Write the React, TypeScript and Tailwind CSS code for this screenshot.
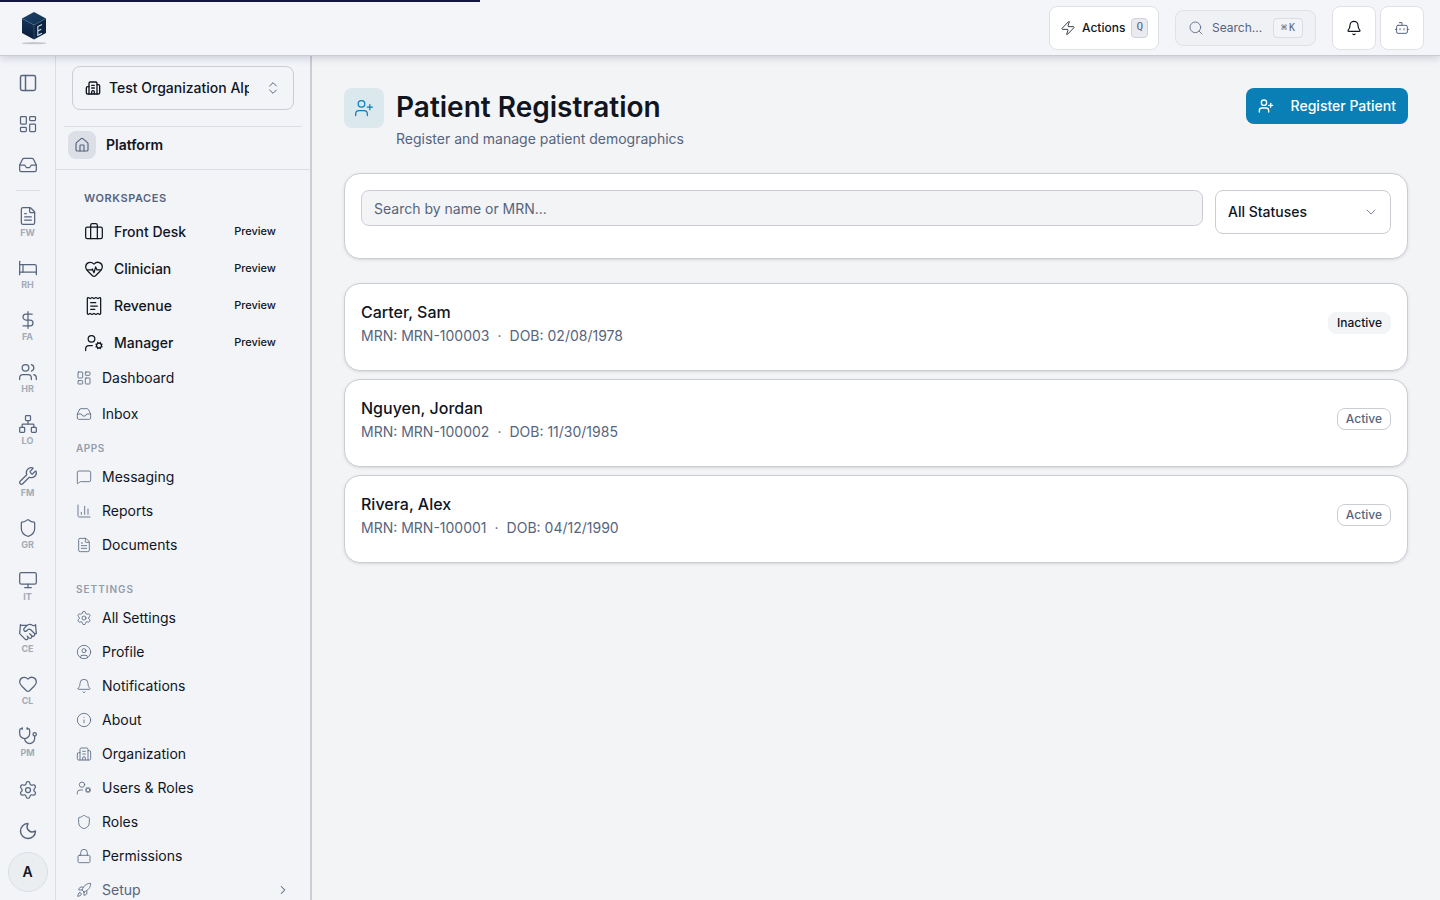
import React from 'react';
import {
  Bed,
  Bell,
  Bot,
  Briefcase,
  Building2,
  ChartColumn,
  ChevronDown,
  ChevronRight,
  ChevronsUpDown,
  CircleUser,
  DollarSign,
  FileText,
  Handshake,
  Heart,
  HeartPulse,
  House,
  Inbox,
  Info,
  LayoutDashboard,
  Lock,
  MessageSquare,
  Monitor,
  Moon,
  Network,
  PanelLeft,
  ReceiptText,
  Rocket,
  Search,
  Settings,
  Shield,
  Stethoscope,
  UserCog,
  UserPlus,
  Users,
  Wrench,
  Zap,
} from 'lucide-react';
import type { LucideIcon } from 'lucide-react';

type NavItem = { icon: LucideIcon; label: string };

const modules: NavItem[] = [
  { icon: FileText, label: 'FW' },
  { icon: Bed, label: 'RH' },
  { icon: DollarSign, label: 'FA' },
  { icon: Users, label: 'HR' },
  { icon: Network, label: 'LO' },
  { icon: Wrench, label: 'FM' },
  { icon: Shield, label: 'GR' },
  { icon: Monitor, label: 'IT' },
  { icon: Handshake, label: 'CE' },
  { icon: Heart, label: 'CL' },
  { icon: Stethoscope, label: 'PM' },
];

const workspaces: NavItem[] = [
  { icon: Briefcase, label: 'Front Desk' },
  { icon: HeartPulse, label: 'Clinician' },
  { icon: ReceiptText, label: 'Revenue' },
  { icon: UserCog, label: 'Manager' },
];

const apps: NavItem[] = [
  { icon: MessageSquare, label: 'Messaging' },
  { icon: ChartColumn, label: 'Reports' },
  { icon: FileText, label: 'Documents' },
];

const settings: NavItem[] = [
  { icon: Settings, label: 'All Settings' },
  { icon: CircleUser, label: 'Profile' },
  { icon: Bell, label: 'Notifications' },
  { icon: Info, label: 'About' },
  { icon: Building2, label: 'Organization' },
  { icon: UserCog, label: 'Users & Roles' },
  { icon: Shield, label: 'Roles' },
  { icon: Lock, label: 'Permissions' },
];

const patients = [
  { name: 'Carter, Sam', mrn: 'MRN-100003', dob: '02/08/1978', active: false },
  { name: 'Nguyen, Jordan', mrn: 'MRN-100002', dob: '11/30/1985', active: true },
  { name: 'Rivera, Alex', mrn: 'MRN-100001', dob: '04/12/1990', active: true },
];

const Logo = () => (
  <svg width="28" height="36" viewBox="0 0 28 36" aria-hidden="true">
    <defs>
      <linearGradient id="cube-top" x1="0" y1="0" x2="1" y2="1">
        <stop offset="0" stopColor="#1d4468" />
        <stop offset="1" stopColor="#12304f" />
      </linearGradient>
      <linearGradient id="cube-left" x1="0" y1="0" x2="0" y2="1">
        <stop offset="0" stopColor="#14365a" />
        <stop offset="1" stopColor="#0a1c38" />
      </linearGradient>
    </defs>
    <path d="M14 2 26 8.5 14 15 2 8.5Z" fill="url(#cube-top)" />
    <path d="M2 8.5 14 15V29.500L2 23Z" fill="url(#cube-left)" />
    <path d="M26 8.500 14 15V29.500L26 23Z" fill="#0d2543" />
    <path d="M2 8.500 14 15 26 8.500M14 15V29" fill="none" stroke="#47708f" strokeWidth=".5" />
    <path d="M22 14.500 17.800 16.600V25.300L22 23.200M17.800 21 21.300 19.200" fill="none" stroke="#cfdde9" strokeWidth="1.100" />
    <ellipse cx="14" cy="33.200" rx="12.500" ry="1.100" fill="#c3c6cd" />
  </svg>
);

const RailButton = ({ icon: Icon, label, stroke = 1.5 }: NavItem & { stroke?: number }) => (
  <button aria-label={label} className="flex h-10 w-10 items-center justify-center rounded-lg text-[#56657d]">
    <Icon size={20} strokeWidth={stroke} />
  </button>
);

const SideLink = ({ icon: Icon, label }: NavItem) => (
  <a href="#" className="flex h-[34px] items-center gap-2.5 rounded-lg px-2 text-sm text-[#10151f]">
    <Icon size={16} strokeWidth={1.25} className="text-[#56657d]" />
    {label}
  </a>
);

const TopBar = () => (
  <header className="relative z-10 flex h-14 shrink-0 items-center justify-between border-b border-[#c9cbd3] bg-[#f4f5f8] pr-4 pl-5 shadow-[0_2px_8px_rgba(20,24,60,0.18)]">
    <div className="absolute top-0 left-0 h-0.5 w-1/3 bg-[#14183f]" />
    <Logo />
    <div className="flex items-center">
      <button className="mr-4 flex h-11 items-center gap-1.5 rounded-lg border border-[#dfe1e7] bg-white px-2.5 text-xs font-medium text-[#10151f]">
        <Zap size={16} strokeWidth={1.25} />
        Actions
        <kbd className="flex h-5 items-center rounded border border-[#cfd2da] bg-[#e9ebf1] px-1 font-['DejaVu_Sans_Mono',monospace] text-[11px] text-[#56657d]">
          Q
        </kbd>
      </button>
      <button className="mr-4 flex h-9 w-[141px] items-center gap-2 rounded-lg border border-[#dfe1e7] bg-[#eff1f5] px-3 text-xs text-[#56657d]">
        <Search size={16} strokeWidth={1.25} />
        <span className="flex-1 text-left">Search...</span>
        <kbd className="flex h-5 items-center gap-0.5 rounded border border-[#d9dce3] bg-[#f3f4f7] px-[7px] font-['DejaVu_Sans_Mono',monospace] text-[10px]">
          <span>⌘</span>
          <span>K</span>
        </kbd>
      </button>
      <button aria-label="Notifications" className="mr-1 flex h-11 w-11 items-center justify-center rounded-lg border border-[#dfe1e7] bg-white text-[#10151f]">
        <Bell size={16} strokeWidth={1.75} />
      </button>
      <button aria-label="Assistant" className="flex h-11 w-11 items-center justify-center rounded-lg border border-[#dfe1e7] bg-white text-[#56657d]">
        <Bot size={16} strokeWidth={1.5} />
      </button>
    </div>
  </header>
);

const Rail = () => (
  <nav aria-label="Modules" className="flex w-14 shrink-0 flex-col items-center border-r border-[#dcdee5] pt-[7px] pb-2">
    <div className="flex flex-col gap-px">
      <RailButton icon={PanelLeft} label="Toggle sidebar" stroke={1.75} />
      <RailButton icon={LayoutDashboard} label="Dashboard" />
      <RailButton icon={Inbox} label="Inbox" />
    </div>
    <hr className="mt-[5px] w-6 border-[#dcdee5]" />
    <div className="mt-[7px] flex flex-1 flex-col gap-1">
      {modules.map(({ icon: Icon, label }) => (
        <a key={label} href="#" className="flex h-12 w-10 flex-col items-center pt-2 text-[#56657d]">
          <Icon size={20} strokeWidth={1.5} />
          <span className="mt-px text-[9px] leading-3 font-bold text-[#a3abb9]">{label}</span>
        </a>
      ))}
    </div>
    <div className="flex flex-col gap-px">
      <RailButton icon={Settings} label="Settings" />
      <RailButton icon={Moon} label="Dark mode" stroke={1.75} />
      <button className="h-10 w-10 rounded-full border border-[#dcdfe5] bg-[#eaeef1] text-sm font-semibold text-[#10151f]">A</button>
    </div>
  </nav>
);

const Sidebar = () => (
  <aside className="w-64 shrink-0 overflow-hidden border-r-2 border-[#cbcdd7]">
    <div className="px-4 pt-2.5">
      <button className="flex h-11 w-full items-center rounded-lg border border-[#cbcdd5] px-3 text-sm font-medium text-[#10151f]">
        <Building2 size={16} strokeWidth={2} className="shrink-0" />
        <span className="mr-4 ml-2 min-w-0 flex-1 overflow-hidden text-left whitespace-nowrap">Test Organization Alpha</span>
        <ChevronsUpDown size={16} strokeWidth={1.5} className="shrink-0 text-[#56657d]" />
      </button>
    </div>
    <div className="mx-2 mt-4 border-t border-[#dcdee5]" />
    <div className="flex h-[43px] items-start gap-2.5 border-b border-[#dcdee5] px-3 pt-1">
      <span className="flex h-7 w-7 items-center justify-center rounded-lg bg-[#dcdfe6] text-[#56657d]">
        <House size={16} strokeWidth={1.75} />
      </span>
      <h2 className="text-sm leading-7 font-semibold text-[#10151f]">Platform</h2>
    </div>

    <div className="px-3 pt-5">
      <h3 className="px-4 text-[11px] leading-4 font-semibold tracking-wider text-[#56657d]">WORKSPACES</h3>
      <ul className="mt-2 flex flex-col gap-px">
        {workspaces.map(({ icon: Icon, label }) => (
          <li key={label}>
            <a href="#" className="flex h-9 items-center gap-2.5 px-4 text-sm font-medium text-[#10151f]">
              <Icon size={20} strokeWidth={1.5} />
              <span className="flex-1">{label}</span>
              <span className="px-1.5 pb-0.5 text-[11px] leading-4">Preview</span>
            </a>
          </li>
        ))}
      </ul>
      <div className="flex flex-col gap-0.5">
        <SideLink icon={LayoutDashboard} label="Dashboard" />
        <SideLink icon={Inbox} label="Inbox" />
      </div>
      <h3 className="mt-[9px] mb-1 px-2 text-[10px] leading-4 font-semibold tracking-wider text-[#949cac]">APPS</h3>
      {apps.map((item) => (
        <SideLink key={item.label} {...item} />
      ))}
      <h3 className="mt-[19px] mb-1 px-2 text-[10px] leading-4 font-semibold tracking-widest text-[#949cac]">SETTINGS</h3>
      {settings.map((item) => (
        <SideLink key={item.label} {...item} />
      ))}
      <button className="flex h-[34px] w-full items-center gap-2.5 px-2 text-sm text-[#56657d]">
        <Rocket size={16} strokeWidth={1.25} />
        <span className="flex-1 text-left">Setup</span>
        <ChevronRight size={14} strokeWidth={1.75} />
      </button>
    </div>
  </aside>
);

const card = 'rounded-2xl border border-[#cbcdd3] bg-white px-4 pt-4 pb-6 shadow-[0_1px_3px_rgba(16,21,31,0.12)]';

const App = () => (
  <div className="flex h-screen flex-col overflow-hidden bg-[#f3f4f6] font-['Inter','Noto_Sans',sans-serif] text-[#10151f]">
    <TopBar />
    <div className="flex min-h-0 flex-1">
      <div className="flex bg-[#f2f4f8]">
        <Rail />
        <Sidebar />
      </div>

      <main className="min-w-0 flex-1 overflow-hidden p-8">
        <div className="flex items-start gap-3">
          <div className="flex h-10 w-10 items-center justify-center rounded-lg bg-[#dbe8ee] text-[#0a7fb5]">
            <UserPlus size={20} strokeWidth={1.5} />
          </div>
          <div className="flex-1">
            <h1 className="text-[28px] leading-[38px] font-semibold">Patient Registration</h1>
            <p className="mt-[3px] text-sm leading-5 text-[#56657d]">Register and manage patient demographics</p>
          </div>
          <button className="flex h-9 items-center gap-[17px] rounded-lg bg-[#0a7fb5] px-3 text-sm font-medium text-white">
            <UserPlus size={16} strokeWidth={2} />
            Register Patient
          </button>
        </div>

        <div className={`mt-6 flex items-start gap-3 ${card}`}>
          <input
            type="text"
            aria-label="Search patients"
            placeholder="Search by name or MRN..."
            className="h-9 min-w-0 flex-1 rounded-lg border border-[#cbcdd5] bg-[#f3f4f6] px-3 text-sm placeholder:text-[#56657d]"
          />
          <div className="relative w-44">
            <select
              aria-label="Status"
              className="h-11 w-full appearance-none rounded-lg border border-[#cbcdd5] bg-white px-3 text-sm font-medium"
            >
              <option>All Statuses</option>
              <option>Active</option>
              <option>Inactive</option>
            </select>
            <ChevronDown size={16} strokeWidth={1.5} className="pointer-events-none absolute top-3.5 right-3 text-[#7d8797]" />
          </div>
        </div>

        <ul className="mt-6 flex flex-col gap-2">
          {patients.map((p) => (
            <li key={p.mrn} className={`flex items-center justify-between ${card}`}>
              <div>
                <p className="text-base leading-6 font-medium">{p.name}</p>
                <p className="mt-0.5 flex gap-2 text-sm leading-5 text-[#56657d]">
                  <span>MRN: {p.mrn}</span>
                  <span>·</span>
                  <span>DOB: {p.dob}</span>
                </p>
              </div>
              {p.active ? (
                <span className="rounded-lg border border-[#cbcdd5] px-2 text-xs leading-5 font-medium text-[#56657d]">Active</span>
              ) : (
                <span className="rounded-lg border border-[#f3f4f6] bg-[#f3f4f6] px-2 text-xs leading-5 font-medium">Inactive</span>
              )}
            </li>
          ))}
        </ul>
      </main>
    </div>
  </div>
);

export default App;
